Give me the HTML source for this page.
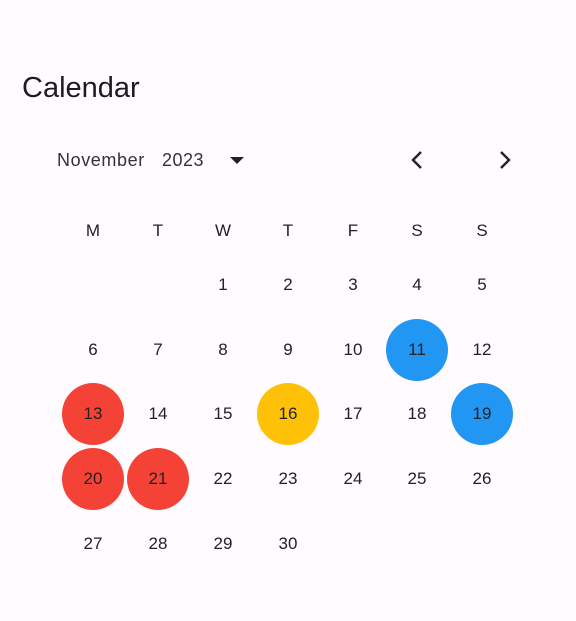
<!DOCTYPE html><html><head><style>
body{margin:0;width:576px;height:621px;background:#fffbfe;font-family:"Liberation Sans",sans-serif;color:#1d1b20;position:relative;overflow:hidden}
.a{position:absolute;white-space:nowrap}
.c{position:absolute;width:62px;height:62px;margin:-30px 0 0 -31px;border-radius:50%;display:flex;align-items:center;justify-content:center;font-size:17px;color:#222}
</style></head><body>
<div class="a" style="left:22px;top:72px;font-size:29px">Calendar</div>
<div class="a" style="left:57px;top:150px;font-size:18px;color:#333;letter-spacing:0.6px">November</div>
<div class="a" style="left:162px;top:150px;font-size:18px;color:#333;letter-spacing:0.5px">2023</div>
<svg class="a" style="left:229px;top:155px" width="16" height="12"><path d="M1 2h14l-7 7z" fill="#222"/></svg>
<svg class="a" style="left:408px;top:150px" width="16" height="20"><path d="M13 2l-8 8 8 8" stroke="#222" stroke-width="2.4" fill="none"/></svg>
<svg class="a" style="left:498px;top:150px" width="16" height="20"><path d="M3 2l8 8-8 8" stroke="#222" stroke-width="2.4" fill="none"/></svg>
<div id="g"></div>
<script>
var xs=[93,158,223,288,353,417,482],ys=[284,349,413,478,543],h='';
'MTWTFSS'.split('').forEach(function(d,i){h+='<div class="c" style="left:'+xs[i]+'px;top:230px">'+d+'</div>'});
var col={11:'#2196f3',19:'#2196f3',13:'#f44336',20:'#f44336',21:'#f44336',16:'#ffc107'};
for(var d=1;d<=30;d++){var p=d+1;var r=Math.floor(p/7),c=p%7;h+='<div class="c" style="left:'+xs[c]+'px;top:'+ys[r]+'px;'+(col[d]?'background:'+col[d]:'')+'">'+d+'</div>'}
document.getElementById('g').innerHTML=h;
</script>
</body></html>
